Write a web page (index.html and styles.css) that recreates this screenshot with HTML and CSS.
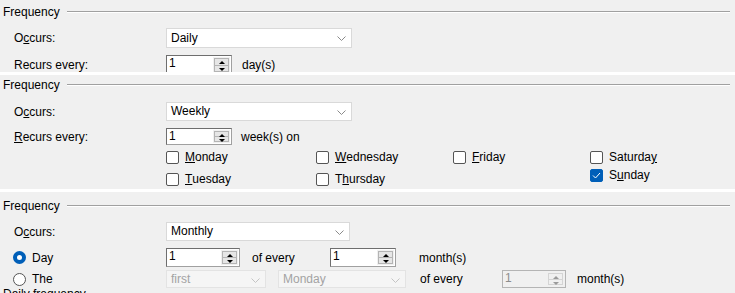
FILE: index.html
```html
<!DOCTYPE html>
<html>
    <head>
        <meta http-equiv="Content-Type" content="text/html;charset=UTF-8">
        <title>Frequency</title>
        <link rel="stylesheet" href="styles.css">
    </head>
    <body>

        <!-- daily -->
        <section class="panel p1">
            <div class="legend"><span>Frequency</span><i class="rule"></i></div>
            <div class="row combo-row">
                <span class="lbl">O<u>c</u>curs:</span>
                <div class="combo w186">Daily<svg class="chev" width="9" height="5" viewBox="0 0 9 5"><polyline points="0.5,0.5 4.5,4.5 8.5,0.5"/></svg></div>
            </div>
            <div class="row spin-row">
                <span class="lbl">Recurs every:</span>
                <div class="spin w66"><span class="val">1</span><span class="btns"><b class="up"></b><b class="dn"></b></span></div>
                <span class="unit">day(s)</span>
            </div>
        </section>

        <!-- weekly -->
        <section class="panel p2">
            <div class="legend"><span>Frequency</span><i class="rule"></i></div>
            <div class="row combo-row">
                <span class="lbl">O<u>c</u>curs:</span>
                <div class="combo w186">Weekly<svg class="chev" width="9" height="5" viewBox="0 0 9 5"><polyline points="0.5,0.5 4.5,4.5 8.5,0.5"/></svg></div>
            </div>
            <div class="row spin-row small">
                <span class="lbl"><u>R</u>ecurs every:</span>
                <div class="spin w66"><span class="val">1</span><span class="btns"><b class="up"></b><b class="dn"></b></span></div>
                <span class="unit u9">week(s) on</span>
            </div>
            <div class="days">
                <div class="col c1">
                    <label class="chk"><i class="box"></i><u>M</u>onday</label>
                    <label class="chk"><i class="box"></i><u>T</u>uesday</label>
                </div>
                <div class="col c2">
                    <label class="chk"><i class="box"></i><u>W</u>ednesday</label>
                    <label class="chk"><i class="box"></i>T<u>h</u>ursday</label>
                </div>
                <div class="col c3">
                    <label class="chk"><i class="box"></i><u>F</u>riday</label>
                </div>
                <div class="col c4">
                    <label class="chk"><i class="box"></i>Saturda<u>y</u></label>
                    <label class="chk"><i class="box on"><svg width="9" height="7" viewBox="0 0 9 7"><polyline points="1,3.5 3.5,6 8,1"/></svg></i>S<u>u</u>nday</label>
                </div>
            </div>
        </section>

        <!-- monthly -->
        <section class="panel p3">
            <div class="legend"><span>Frequency</span><i class="rule"></i></div>
            <div class="row combo-row">
                <span class="lbl">O<u>c</u>curs:</span>
                <div class="combo w184">Monthly<svg class="chev" width="9" height="5" viewBox="0 0 9 5"><polyline points="0.5,0.5 4.5,4.5 8.5,0.5"/></svg></div>
            </div>
            <div class="row spin-row tall">
                <span class="lbl radio-lbl"><i class="radio on"></i>Day</span>
                <div class="spin w74"><span class="val">1</span><span class="btns"><b class="up"></b><b class="dn"></b></span></div>
                <span class="unit gap12 w78">of every</span>
                <div class="spin w66"><span class="val">1</span><span class="btns"><b class="up"></b><b class="dn"></b></span></div>
                <span class="unit gap23">month(s)</span>
            </div>
            <div class="row the-row">
                <span class="lbl radio-lbl"><i class="radio"></i>The</span>
                <div class="combo off w100">first<svg class="chev" width="9" height="5" viewBox="0 0 9 5"><polyline points="0.5,0.5 4.5,4.5 8.5,0.5"/></svg></div>
                <div class="combo off w128 gap12">Monday<svg class="chev" width="9" height="5" viewBox="0 0 9 5"><polyline points="0.5,0.5 4.5,4.5 8.5,0.5"/></svg></div>
                <span class="unit gap14 w82">of every</span>
                <div class="spin off w64"><span class="val">1</span><span class="btns"><b class="up"></b><b class="dn"></b></span></div>
                <span class="unit gap11">month(s)</span>
            </div>
            <div class="next">Daily frequency</div>
        </section>

    </body>
</html>
```

FILE: styles.css
```css
body {
    margin: 0;
    background: #fff;
    font-family: "Liberation Sans", Arial, sans-serif;
    font-size: 12px;
    color: #000;
    overflow: hidden;
}
.panel {
    background: #f0f0f0;
    overflow: hidden;
}
.p1 {height: 72px; padding-top: 4px; box-sizing: border-box; margin-bottom: 3px;}
.p2 {height: 114px; padding-top: 2px; box-sizing: border-box; margin-bottom: 3px;}
.p3 {height: 101px; padding-top: 6px; box-sizing: border-box;}

/* group caption with etched line */
.legend {
    display: flex;
    align-items: center;
    height: 16px;
    padding-left: 3px;
    margin-right: 5px;
}
.legend .rule {
    flex: 1;
    margin-left: 7px;
    border-top: 1px solid #a0a0a0;
    border-bottom: 1px solid #fff;
    height: 0;
}

.row {
    display: flex;
    align-items: center;
    padding-left: 14px;
}
.lbl {width: 152px; flex: none;}
.combo-row {margin-top: 8px;}
.spin-row {margin-top: 7px;}
.p2 .combo-row {margin-top: 9px;}
.the-row {margin-top: 3px;}

u {text-decoration: underline; text-underline-offset: 1px;}

/* combo box */
.combo {
    position: relative;
    height: 19px;
    box-sizing: border-box;
    background: #fff;
    border: 1px solid #d9d9d9;
    padding-left: 4px;
    line-height: 17px;
}
.p1 .combo {height: 20px; line-height: 18px;}
.combo .chev {
    position: absolute;
    right: 5px;
    top: 7px;
    fill: none;
    stroke: #8a8a8a;
    stroke-width: 1;
}
.combo.off {
    background: #f5f5f5;
    border-color: #e3e3e3;
    color: #a3a3a3;
    height: 18px;
    line-height: 16px;
}
.combo.off .chev {stroke: #c4c4c4;}

/* spinner */
.spin {
    display: flex;
    height: 20px;
    box-sizing: border-box;
    background: #fff;
    border: 1px solid #a0a0a0;
    border-left-color: #6e6e6e;
    border-top-color: #6e6e6e;
}
.small .spin {height: 17px;}
.tall .spin {height: 19px;}
.spin .val {
    flex: 1;
    padding-left: 2px;
    line-height: 15px;
}
.spin .btns {
    width: 15px;
    display: flex;
    flex-direction: column;
    background: #f0f0f0;
    border: 1px solid #f0f0f0;
    margin: 1px 1px 1px 0;
}
.spin .btns b {
    flex: 1;
    position: relative;
    background: #e6e6e6;
    border: 1px solid #b4b4b4;
}
.spin .btns b + b {border-top: 0;}
.spin .btns b::after {
    content: "";
    position: absolute;
    left: 4px;
    border-left: 3px solid transparent;
    border-right: 3px solid transparent;
}
.spin .btns .up::after {top: 2px; border-bottom: 3px solid #000;}
.spin .btns .dn::after {top: 2px; border-top: 3px solid #000;}
.spin.off {
    background: #f0f0f0;
    border-color: #b4b4b4;
    color: #8d8d8d;
    height: 18px;
}
.spin.off .btns b {background: #f0f0f0; border-color: #d4d4d4;}
.spin.off .btns b::after {border-bottom-color: #9a9a9a; border-top-color: #9a9a9a;}

.w186 {width: 186px;}
.w184 {width: 184px;}
.w100 {width: 100px;}
.w128 {width: 128px;}
.w66 {width: 66px;}
.w64 {width: 64px;}
.w74 {width: 74px;}
.unit {margin-left: 10px; flex: none;}
.u9 {margin-left: 9px;}
.gap11 {margin-left: 11px;}
.gap12 {margin-left: 12px;}
.gap14 {margin-left: 14px;}
.gap23 {margin-left: 23px;}
.w78 {width: 78px;}
.w82 {width: 82px;}

/* weekday checkboxes */
.days {
    display: flex;
    padding-left: 166px;
    margin-top: 4px;
}
.col {display: flex; flex-direction: column; gap: 6px;}
.c1 {width: 150px;}
.c2 {width: 137px;}
.c3 {width: 137px;}
.c4 {gap: 2px;}
.chk {
    display: flex;
    align-items: center;
    height: 16px;
}
.box {
    width: 11px;
    height: 11px;
    border: 1px solid #555;
    border-radius: 2px;
    background: #fff;
    margin-right: 6px;
    display: flex;
    align-items: center;
    justify-content: center;
}
.box.on {background: #005fb8; border-color: #005fb8;}
.box svg {fill: none; stroke: #fff; stroke-width: 1;}

/* radios */
.radio-lbl {
    display: flex;
    align-items: center;
    margin-left: -1px;
    width: 153px;
}
.radio {
    width: 11px;
    height: 11px;
    border: 1px solid #555;
    border-radius: 50%;
    background: #fff;
    margin-right: 6px;
    box-sizing: content-box;
}
.radio.on {
    width: 5px;
    height: 5px;
    border: 4px solid #005fb8;
    background: #fff;
}

.next {
    padding-left: 3px;
    margin-top: -1px;
}
```
